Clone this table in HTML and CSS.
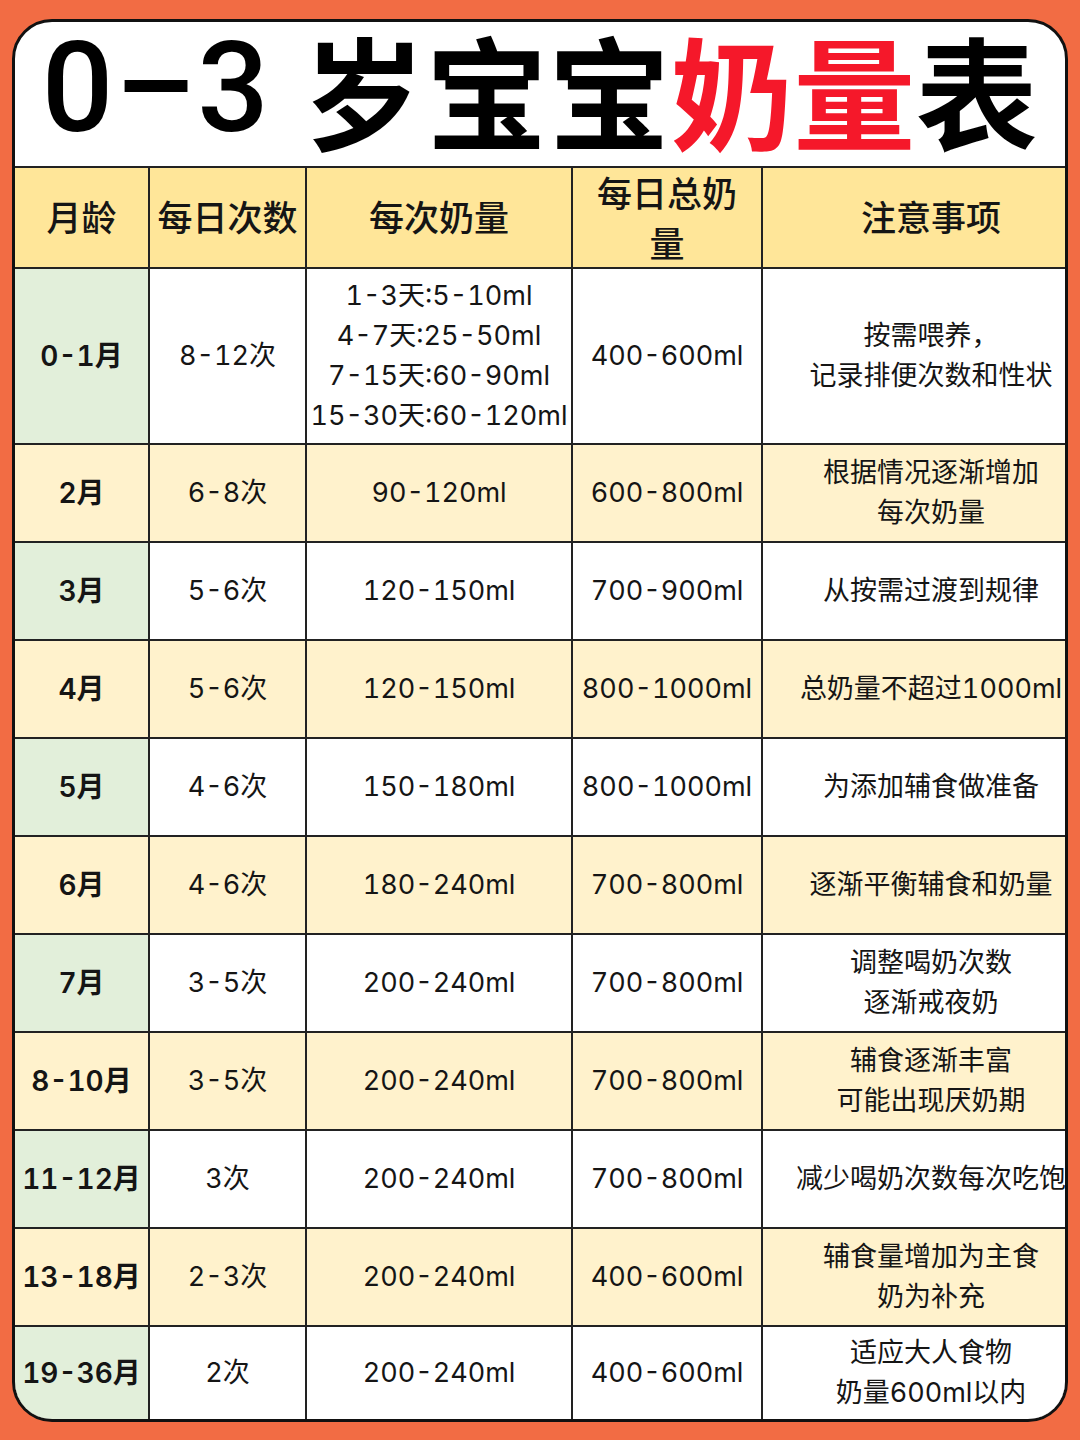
FILE: index.html
```html
<!DOCTYPE html>
<html lang="zh-CN">
<head>
<meta charset="utf-8">
<title>0-3岁宝宝奶量表</title>
<link rel="stylesheet" href="styles.css">
</head>
<body>
<div class="card">
  <div class="title"><span class="num">0–3 </span>岁宝宝<span class="red">奶量</span>表</div>
  <div class="grid">
    <div class="cell hd">月龄</div>
    <div class="cell hd">每日次数</div>
    <div class="cell hd">每次奶量</div>
    <div class="cell hd two">每日总奶<br>量</div>
    <div class="cell hd">注意事项</div>

    <div class="cell age">0-1月</div>
    <div class="cell">8-12次</div>
    <div class="cell multi">1-3天:5-10ml<br>4-7天:25-50ml<br>7-15天:60-90ml<br>15-30天:60-120ml</div>
    <div class="cell">400-600ml</div>
    <div class="cell multi">按需喂养，<br>记录排便次数和性状</div>

    <div class="cell age alt">2月</div>
    <div class="cell alt">6-8次</div>
    <div class="cell alt">90-120ml</div>
    <div class="cell alt">600-800ml</div>
    <div class="cell alt multi">根据情况逐渐增加<br>每次奶量</div>

    <div class="cell age">3月</div>
    <div class="cell">5-6次</div>
    <div class="cell">120-150ml</div>
    <div class="cell">700-900ml</div>
    <div class="cell">从按需过渡到规律</div>

    <div class="cell age alt">4月</div>
    <div class="cell alt">5-6次</div>
    <div class="cell alt">120-150ml</div>
    <div class="cell alt">800-1000ml</div>
    <div class="cell alt">总奶量不超过1000ml</div>

    <div class="cell age">5月</div>
    <div class="cell">4-6次</div>
    <div class="cell">150-180ml</div>
    <div class="cell">800-1000ml</div>
    <div class="cell">为添加辅食做准备</div>

    <div class="cell age alt">6月</div>
    <div class="cell alt">4-6次</div>
    <div class="cell alt">180-240ml</div>
    <div class="cell alt">700-800ml</div>
    <div class="cell alt">逐渐平衡辅食和奶量</div>

    <div class="cell age">7月</div>
    <div class="cell">3-5次</div>
    <div class="cell">200-240ml</div>
    <div class="cell">700-800ml</div>
    <div class="cell multi">调整喝奶次数<br>逐渐戒夜奶</div>

    <div class="cell age alt">8-10月</div>
    <div class="cell alt">3-5次</div>
    <div class="cell alt">200-240ml</div>
    <div class="cell alt">700-800ml</div>
    <div class="cell alt multi">辅食逐渐丰富<br>可能出现厌奶期</div>

    <div class="cell age">11-12月</div>
    <div class="cell">3次</div>
    <div class="cell">200-240ml</div>
    <div class="cell">700-800ml</div>
    <div class="cell">减少喝奶次数每次吃饱</div>

    <div class="cell age alt">13-18月</div>
    <div class="cell alt">2-3次</div>
    <div class="cell alt">200-240ml</div>
    <div class="cell alt">400-600ml</div>
    <div class="cell alt multi">辅食量增加为主食<br>奶为补充</div>

    <div class="cell age">19-36月</div>
    <div class="cell">2次</div>
    <div class="cell">200-240ml</div>
    <div class="cell">400-600ml</div>
    <div class="cell multi">适应大人食物<br>奶量600ml以内</div>
  </div>
</div>
</body>
</html>
```

FILE: styles.css
```css
html, body {
  margin: 0;
  padding: 0;
}
body {
  background: #f26c44;
  width: 1080px;
  height: 1440px;
  font-family: "Inter", "Noto Sans CJK SC", sans-serif;
  color: #151515;
  overflow: hidden;
}
.card {
  margin: 19px 12px 0 12px;
  width: 1050px;
  height: 1397px;
  border: 3px solid #111;
  border-radius: 40px;
  background: #fff;
  overflow: hidden;
}
.title {
  height: 132px;
  padding-bottom: 12px;
  display: flex;
  align-items: center;
  justify-content: center;
  font-family: "Noto Sans CJK SC", sans-serif;
  font-weight: 700;
  font-size: 122px;
  line-height: 132px;
  color: #000;
  white-space: pre;
  letter-spacing: 0.5px;
}
.title .num {
  font-family: "Roboto", sans-serif;
  font-weight: 500;
  font-size: 126px;
  line-height: 100px;
  letter-spacing: 1.5px;
  vertical-align: -7px;
}
.title .red {
  color: #f5182a;
}
.grid {
  display: grid;
  width: 1084px;
  grid-template-columns: 133px 155px 264px 188px 336px;
  grid-template-rows: 99px 174px repeat(9, 96px) 92px;
  gap: 2px;
  padding-top: 2px;
  background: #222;
}
.cell {
  background: #fff;
  display: flex;
  align-items: center;
  justify-content: center;
  text-align: center;
  font-size: 27px;
  line-height: 40px;
  white-space: nowrap;
  font-weight: 400;
  font-feature-settings: "tnum" 1;
}
.cell.alt {
  background: #fff2cc;
}
.cell.age {
  background: #e2efda;
  font-weight: 600;
  font-size: 28px;
}
.cell.age.alt {
  background: #fff2cc;
}
.cell.hd {
  background: #ffe699;
  font-size: 35px;
  font-weight: 500;
  line-height: 50px;
}
.cell.hd.two {
  padding-top: 2px;
}
```
